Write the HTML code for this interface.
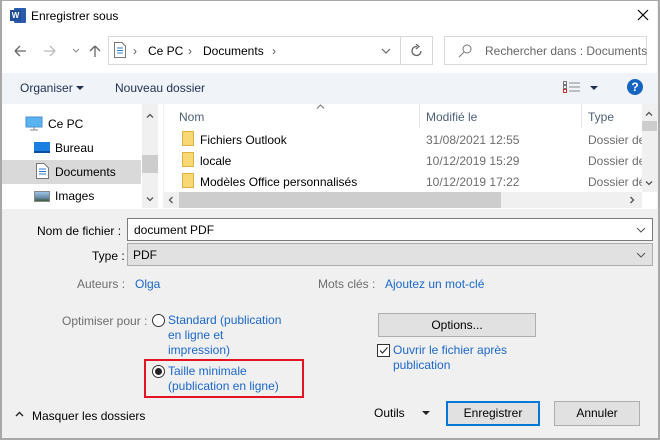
<!DOCTYPE html>
<html><head><meta charset="utf-8"><style>
*{margin:0;padding:0;box-sizing:border-box}
body{width:660px;height:440px;overflow:hidden;background:#f0f0f0;font-family:"Liberation Sans",sans-serif;font-size:12px;color:#000;position:relative}
.a{position:absolute;white-space:nowrap}
.lnk{color:#1a67c8}
.g{color:#6d6d6d}
</style></head><body>
<div class="a" style="left:0;top:0;width:660px;height:440px;border:2px solid #a8a8a8;border-top:1px solid #a8a8a8"></div>
<div class="a" style="left:2px;top:1px;width:655px;height:72px;background:#fff"></div>
<!-- word icon -->
<div class="a" style="left:14px;top:8px;width:12px;height:15px;background:#2b5cab;border-radius:1px"></div>
<div class="a" style="left:10px;top:10px;width:11px;height:11px;background:#1e4e9c;color:#fff;font-size:8px;font-weight:bold;text-align:center;line-height:11px">W</div>
<div class="a" style="left:31px;top:9px;font-size:12px">Enregistrer sous</div>
<svg class="a" style="left:637px;top:9px" width="12" height="12"><path d="M1 1L11 11M11 1L1 11" stroke="#000" stroke-width="1.2"/></svg>
<!-- nav -->
<svg class="a" style="left:14px;top:44px" width="90" height="14"><path d="M1 7H12M1 7L6 2M1 7L6 12" stroke="#666" stroke-width="1.3" fill="none"/><path d="M30 7H41M41 7L36 2M41 7L36 12" stroke="#bbb" stroke-width="1.3" fill="none"/><path d="M59 5L62 8L65 5" stroke="#888" fill="none"/><path d="M81 13V2M81 2L76 7M81 2L86 7" stroke="#666" stroke-width="1.3" fill="none"/></svg>
<div class="a" style="left:108px;top:36px;width:325px;height:29px;border:1px solid #d9d9d9;background:#fff"></div>
<div class="a" style="left:400px;top:37px;width:1px;height:27px;background:#d9d9d9"></div>
<svg class="a" style="left:113px;top:42px" width="14" height="16"><path d="M1.5 .5H9L12.5 4V15.5H1.5Z" fill="#fff" stroke="#777"/><path d="M4 6H10M4 8.5H10M4 11H10" stroke="#2a7bd6"/></svg>
<div class="a" style="left:133px;top:44px;color:#555">›</div>
<div class="a" style="left:148px;top:44px">Ce PC</div>
<div class="a" style="left:188px;top:44px;color:#555">›</div>
<div class="a" style="left:203px;top:44px">Documents</div>
<div class="a" style="left:272px;top:44px;color:#555">›</div>
<svg class="a" style="left:381px;top:48px" width="10" height="6"><path d="M1 1L5 5L9 1" stroke="#666" fill="none" stroke-width="1.2"/></svg>
<svg class="a" style="left:410px;top:44px" width="14" height="14"><path d="M11 7A4.5 4.5 0 1 1 7 2.5" stroke="#666" stroke-width="1.3" fill="none"/><path d="M6 0L9 2.5L6 5" stroke="#666" fill="none" stroke-width="1.2"/></svg>
<div class="a" style="left:444px;top:36px;width:203px;height:29px;border:1px solid #d9d9d9;background:#fff"></div>
<svg class="a" style="left:458px;top:44px" width="14" height="14"><circle cx="9" cy="5" r="4" stroke="#777" fill="none"/><path d="M6 8L1 13" stroke="#777"/></svg>
<div class="a" style="left:485px;top:44px;color:#666">Rechercher dans : Documents</div>
<!-- toolbar -->
<div class="a" style="left:2px;top:73px;width:655px;height:31px;background:#f0f3f8"></div>
<div class="a" style="left:20px;top:81px;color:#1e3050">Organiser</div>
<svg class="a" style="left:76px;top:86px" width="8" height="5"><path d="M0 0H8L4 4Z" fill="#1e3050"/></svg>
<div class="a" style="left:115px;top:81px;color:#1e3050">Nouveau dossier</div>
<svg class="a" style="left:563px;top:81px" width="18" height="12"><rect x=".5" y=".5" width="3" height="3" fill="none" stroke="#777"/><rect x=".5" y="4.5" width="3" height="3" fill="none" stroke="#777"/><rect x=".5" y="8.5" width="3" height="3" fill="none" stroke="#c33"/><path d="M6 2H17M6 6H17M6 10H17" stroke="#888"/></svg>
<svg class="a" style="left:590px;top:86px" width="8" height="5"><path d="M0 0H8L4 4Z" fill="#1e3050"/></svg>
<div class="a" style="left:627px;top:79px;width:16px;height:16px;border-radius:50%;background:#1565c0;color:#fff;font-weight:bold;text-align:center;line-height:16px;font-size:12px">?</div>
<!-- pane -->
<div class="a" style="left:2px;top:104px;width:655px;height:105px;background:#fff"></div>
<div class="a" style="left:142px;top:104px;width:16px;height:104px;background:#f0f0f0"></div>
<div class="a" style="left:142px;top:155px;width:16px;height:18px;background:#cdcdcd"></div>
<svg class="a" style="left:146px;top:113px" width="8" height="5"><path d="M1 4.5L4 1.5L7 4.5" stroke="#555" fill="none" stroke-width="1.3"/></svg>
<svg class="a" style="left:146px;top:197px" width="8" height="5"><path d="M1 .5L4 3.5L7 .5" stroke="#555" fill="none" stroke-width="1.3"/></svg>
<div class="a" style="left:2px;top:160px;width:139px;height:24px;background:#d9d9d9"></div>
<svg class="a" style="left:25px;top:116px" width="18" height="15"><rect x="1" y="1" width="16" height="10" fill="#5bb3f0" stroke="#4a8fd0"/><path d="M5 14H13M9 11V14" stroke="#888"/></svg>
<div class="a" style="left:48px;top:117px">Ce PC</div>
<div class="a" style="left:34px;top:142px;width:16px;height:11px;background:#1a7fe0;border-bottom:2px solid #0d4f9c"></div>
<div class="a" style="left:55px;top:141px">Bureau</div>
<svg class="a" style="left:36px;top:163px" width="13" height="16"><path d="M.5 .5H8L12.5 5V15.5H.5Z" fill="#fff" stroke="#777"/><path d="M3 6H10M3 8.5H10M3 11H10" stroke="#2a7bd6"/></svg>
<div class="a" style="left:55px;top:165px">Documents</div>
<div class="a" style="left:34px;top:191px;width:16px;height:11px;border:1px solid #888;background:linear-gradient(#9bc3e6,#6b8faa 60%,#3d5a3a)"></div>
<div class="a" style="left:55px;top:189px">Images</div>
<div class="a" style="left:163px;top:104px;width:1px;height:104px;background:#f0f0f0"></div>
<svg class="a" style="left:316px;top:104px" width="9" height="5"><path d="M1 4.5L4.5 1L8 4.5" stroke="#777" fill="none"/></svg>
<div class="a" style="left:179px;top:110px;color:#4c607a">Nom</div>
<div class="a" style="left:419px;top:104px;width:1px;height:24px;background:#e5e5e5"></div>
<div class="a" style="left:426px;top:110px;color:#4c607a">Modifié le</div>
<div class="a" style="left:581px;top:104px;width:1px;height:24px;background:#e5e5e5"></div>
<div class="a" style="left:588px;top:110px;color:#4c607a">Type</div>
<div class="a" style="left:182px;top:131px;width:12px;height:15px;background:#f8d775;border:1px solid #e0b040"></div>
<div class="a" style="left:200px;top:133px">Fichiers Outlook</div>
<div class="a" style="left:426px;top:133px;color:#6d6d6d">31/08/2021 12:55</div>
<div class="a" style="left:588px;top:133px;color:#6d6d6d">Dossier de</div>
<div class="a" style="left:182px;top:152px;width:12px;height:15px;background:#f8d775;border:1px solid #e0b040"></div>
<div class="a" style="left:200px;top:154px">locale</div>
<div class="a" style="left:426px;top:154px;color:#6d6d6d">10/12/2019 15:29</div>
<div class="a" style="left:588px;top:154px;color:#6d6d6d">Dossier de</div>
<div class="a" style="left:182px;top:173px;width:12px;height:15px;background:#f8d775;border:1px solid #e0b040"></div>
<div class="a" style="left:200px;top:175px">Modèles Office personnalisés</div>
<div class="a" style="left:426px;top:175px;color:#6d6d6d">10/12/2019 17:22</div>
<div class="a" style="left:588px;top:175px;color:#6d6d6d">Dossier de</div>
<div class="a" style="left:642px;top:104px;width:15px;height:88px;background:#f0f0f0"></div>
<div class="a" style="left:642px;top:121px;width:15px;height:10px;background:#cdcdcd"></div>
<svg class="a" style="left:645px;top:111px" width="8" height="5"><path d="M1 4.5L4 1.5L7 4.5" stroke="#555" fill="none" stroke-width="1.3"/></svg>
<svg class="a" style="left:645px;top:181px" width="8" height="5"><path d="M1 .5L4 3.5L7 .5" stroke="#555" fill="none" stroke-width="1.3"/></svg>
<div class="a" style="left:164px;top:192px;width:478px;height:16px;background:#f0f0f0"></div>
<div class="a" style="left:179px;top:192px;width:322px;height:16px;background:#cdcdcd"></div>
<svg class="a" style="left:168px;top:196px" width="5" height="8"><path d="M4.5 1L1.5 4L4.5 7" stroke="#555" fill="none" stroke-width="1.3"/></svg>
<svg class="a" style="left:630px;top:196px" width="5" height="8"><path d="M.5 1L3.5 4L.5 7" stroke="#555" fill="none" stroke-width="1.3"/></svg>
<!-- form -->
<div class="a" style="left:37px;top:224px">Nom de fichier :</div>
<div class="a" style="left:127px;top:218px;width:526px;height:23px;border:1px solid #7a7a7a;background:#fff;padding:4px 6px">document PDF</div>
<svg class="a" style="left:636px;top:227px" width="10" height="6"><path d="M1 1L5 5L9 1" stroke="#555" fill="none"/></svg>
<div class="a" style="left:92px;top:249px">Type :</div>
<div class="a" style="left:127px;top:243px;width:526px;height:23px;border:1px solid #adadad;background:#e1e1e1;padding:4px 5px">PDF</div>
<svg class="a" style="left:636px;top:252px" width="10" height="6"><path d="M1 1L5 5L9 1" stroke="#555" fill="none"/></svg>
<div class="a g" style="left:77px;top:277px">Auteurs :</div>
<div class="a lnk" style="left:135px;top:277px">Olga</div>
<div class="a g" style="left:318px;top:277px">Mots clés :</div>
<div class="a lnk" style="left:385px;top:277px">Ajoutez un mot-clé</div>
<div class="a g" style="left:62px;top:314px">Optimiser pour :</div>
<div class="a" style="left:152px;top:314px;width:13px;height:13px;border:1px solid #333;border-radius:50%;background:#fff"></div>
<div class="a lnk" style="left:168px;top:313px;line-height:15px">Standard (publication<br>en ligne et<br>impression)</div>
<div class="a" style="left:144px;top:359px;width:160px;height:39px;border:2px solid #e3131f"></div>
<div class="a" style="left:152px;top:365px;width:13px;height:13px;border:1px solid #333;border-radius:50%;background:#fff"></div>
<div class="a" style="left:155px;top:368px;width:7px;height:7px;border-radius:50%;background:#222"></div>
<div class="a lnk" style="left:168px;top:364px;line-height:15px">Taille minimale<br>(publication en ligne)</div>
<div class="a" style="left:378px;top:313px;width:158px;height:24px;border:1px solid #adadad;background:#e1e1e1;text-align:center;line-height:22px">Options...</div>
<div class="a" style="left:377px;top:344px;width:13px;height:13px;border:1px solid #333;background:#fff"></div>
<svg class="a" style="left:378px;top:345px" width="11" height="11"><path d="M2 5.5L4.5 8L9.5 2.5" stroke="#333" fill="none" stroke-width="1.2"/></svg>
<div class="a lnk" style="left:393px;top:343px;line-height:15px">Ouvrir le fichier après<br>publication</div>
<svg class="a" style="left:15px;top:411px" width="9" height="6"><path d="M1 5L4.5 1.5L8 5" stroke="#222" fill="none" stroke-width="1.4"/></svg>
<div class="a" style="left:32px;top:409px">Masquer les dossiers</div>
<div class="a" style="left:374px;top:406px">Outils</div>
<svg class="a" style="left:422px;top:411px" width="8" height="5"><path d="M0 0H8L4 4Z" fill="#222"/></svg>
<div class="a" style="left:446px;top:401px;width:94px;height:25px;border:2px solid #0078d7;background:#e1e1e1;text-align:center;line-height:21px">Enregistrer</div>
<div class="a" style="left:554px;top:401px;width:86px;height:25px;border:1px solid #adadad;background:#e1e1e1;text-align:center;line-height:23px">Annuler</div>
</body></html>
